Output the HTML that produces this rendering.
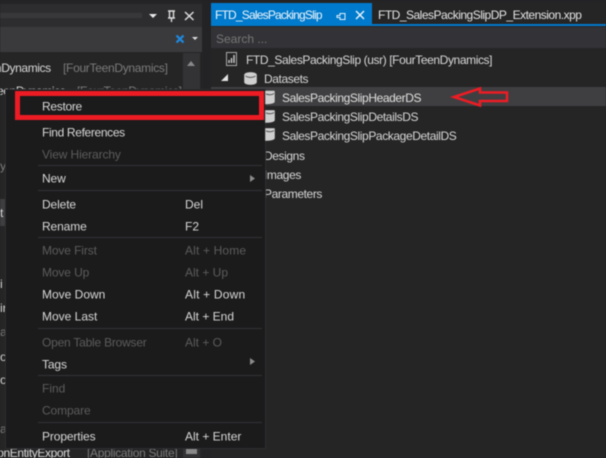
<!DOCTYPE html>
<html><head><meta charset="utf-8"><style>
html,body{margin:0;padding:0;background:#222224}
#r{position:relative;width:606px;height:458px;overflow:hidden;background:#252526;font:12px "Liberation Sans",sans-serif;color:#d8d8d8;filter:blur(.4px)}
.a{position:absolute}
.t{position:absolute;white-space:nowrap;line-height:16px;font-size:12px}
.d{color:#5c5c5c}
.g{color:#7b7b7b;letter-spacing:-.3px}
.k{letter-spacing:-.4px}
.m{letter-spacing:-.12px}
.s{position:absolute;left:38px;width:224px;height:1px;background:#333337}
svg{position:absolute;left:0;top:0}
</style></head><body><div id="r">
<div class="a" style="left:0;top:0;width:606px;height:3px;background:#242426"></div>
<div class="a" style="left:0;top:4px;width:202px;height:23px;background:#2d2d30"></div>
<div class="a" style="left:0;top:13px;width:142px;height:5px;background:#38383b"></div>
<div class="a" style="left:0;top:27px;width:202px;height:25px;background:#3a3a3d"></div>
<div class="a" style="left:0;top:52px;width:202px;height:406px;background:#252526"></div>
<div class="a" style="left:183px;top:53px;width:17px;height:405px;background:#333336"></div>
<div class="a" style="left:202px;top:0;width:9px;height:458px;background:#232325"></div>
<div class="a" style="left:211px;top:27px;width:395px;height:21px;background:#333337"></div>
<div class="a" style="left:211px;top:48px;width:395px;height:410px;background:#252526"></div>
<div class="a" style="left:211px;top:3px;width:161px;height:23px;background:#007acc"></div>
<div class="a" style="left:372px;top:24px;width:234px;height:2px;background:#007acc"></div>
<div class="a" style="left:211px;top:87px;width:395px;height:19px;background:#3f3f41"></div>
<div class="t" style="left:215px;top:7px;color:#eef6fc;letter-spacing:-.8px">FTD_SalesPackingSlip</div>
<div class="t" style="left:378px;top:7px;color:#e4e4e4;letter-spacing:-.5px">FTD_SalesPackingSlipDP_Extension.xpp</div>
<div class="t" style="left:216px;top:31px;color:#777">Search ...</div>
<div class="t k" style="left:246px;top:52px">FTD_SalesPackingSlip (usr) [FourTeenDynamics]</div>
<div class="t k" style="left:264px;top:71px">Datasets</div>
<div class="t k" style="left:282px;top:90px;color:#e0e0e0">SalesPackingSlipHeaderDS</div>
<div class="t k" style="left:282px;top:109px">SalesPackingSlipDetailsDS</div>
<div class="t k" style="left:282px;top:128px">SalesPackingSlipPackageDetailDS</div>
<div class="t k" style="left:264px;top:148px">Designs</div>
<div class="t k" style="left:264px;top:167px">Images</div>
<div class="t k" style="left:264px;top:186px">Parameters</div>
<div class="t k" style="left:-5px;top:60px">nDynamics</div>
<div class="t g" style="left:63px;top:60px">[FourTeenDynamics]</div>
<div class="t k" style="left:-3px;top:83px">eenDynamics</div>
<div class="t g" style="left:77px;top:83px">[FourTeenDynamics]</div>
<div class="t k" style="left:-8px;top:445px">tionEntityExport</div>
<div class="t g" style="left:87px;top:445px">[Application Suite]</div>
<div class="a" style="left:0;top:199px;width:5px;height:27px;background:#3e3e40"></div>
<div class="t" style="left:0;top:205px">t</div>
<div class="t g" style="left:0;top:158px">y</div>
<div class="t" style="left:0;top:276px">i</div>
<div class="t" style="left:0;top:300px">ir</div>
<div class="t g" style="left:0;top:324px">a</div>
<div class="t" style="left:0;top:349px">o</div>
<div class="t" style="left:0;top:372px">o</div>
<div class="t g" style="left:0;top:421px">a</div>
<div class="a" style="left:186px;top:448px;width:11px;height:6px;background:#8a8a8a"></div>
<div class="a" style="left:6px;top:90px;width:259px;height:358px;background:#1b1b1c;box-shadow:0 0 0 1px #2d2d30"></div>
<div class="s" style="top:165px"></div><div class="s" style="top:190px"></div><div class="s" style="top:237px"></div><div class="s" style="top:328px"></div><div class="s" style="top:375px"></div><div class="s" style="top:422px"></div>
<div class="a" style="left:0;top:0;width:606px;height:458px;transform:translateY(-.5px)">
<div class="t m" style="left:42px;top:99px;letter-spacing:-.3px">Restore</div>
<div class="t m" style="left:42px;top:125px;letter-spacing:-.35px">Find References</div>
<div class="t d m" style="left:42px;top:147px">View Hierarchy</div>
<div class="t m" style="left:42px;top:171px">New</div>
<div class="t m" style="left:42px;top:197px">Delete</div><div class="t" style="left:185px;top:197px">Del</div>
<div class="t m" style="left:42px;top:219px">Rename</div><div class="t" style="left:185px;top:219px">F2</div>
<div class="t d m" style="left:42px;top:243px">Move First</div><div class="t d" style="left:185px;top:243px;letter-spacing:.15px">Alt + Home</div>
<div class="t d m" style="left:42px;top:265px">Move Up</div><div class="t d" style="left:185px;top:265px">Alt + Up</div>
<div class="t" style="left:42px;top:287px">Move Down</div><div class="t" style="left:185px;top:287px;letter-spacing:.2px">Alt + Down</div>
<div class="t" style="left:42px;top:309px">Move Last</div><div class="t" style="left:185px;top:309px">Alt + End</div>
<div class="t d" style="left:42px;top:335px;letter-spacing:-.22px">Open Table Browser</div><div class="t d" style="left:185px;top:335px">Alt + O</div>
<div class="t m" style="left:42px;top:357px">Tags</div>
<div class="t d" style="left:42px;top:381px">Find</div>
<div class="t d m" style="left:42px;top:403px">Compare</div>
<div class="t m" style="left:42px;top:429px">Properties</div><div class="t" style="left:185px;top:429px">Alt + Enter</div>
</div>
<div class="a" style="left:15px;top:91px;width:239px;height:19px;border:5px solid #ed1c24"></div>
<svg width="606" height="458" viewBox="0 0 606 458">
<path d="M149 14h8l-4 4z" fill="#e8e8e8"/>
<path d="M168 11h7M169.500 11v7h4v-7M168 18h7M171.500 18v4" fill="none" stroke="#ddd" stroke-width="1.400"/>
<path d="M185 12l8.500 8M193.500 12l-8.500 8" stroke="#ddd" stroke-width="1.500"/>
<path d="M176.500 35.500l7 7M183.500 35.500l-7 7" stroke="#1e8ae0" stroke-width="2.200"/>
<path d="M192 37h6l-3 3z" fill="#ddd"/>
<path d="M187 66l4-5 4 5z" fill="#888"/>
<path d="M337 15.500h3v-2h5v6h-5v-2h-3z" fill="none" stroke="#dff0fb"/>
<path d="M356 11l8 8M364 11l-8 8" stroke="#eef6fc" stroke-width="1.400"/>
<rect x="226.500" y="52.500" width="10" height="13" fill="none" stroke="#a8a8a8"/><path d="M229 63v-3M231.500 63v-5M234 63v-8" stroke="#ccc" stroke-width="1.400"/>
<path d="M228 74V81H221z" fill="#e4e4e4"/>
<g fill="#cfcfcf" stroke="#252526" stroke-width=".4"><path d="M244 75c0-4 13-4 13 0v7c0 4-13 4-13 0z"/><path d="M265 90.500h9c1 0 1 1 1 2v9c0 2-4 3-10 3z"/><path d="M265 110h9c1 0 1 1 1 2v8c0 2-4 3-10 3z"/><path d="M265 128h9c1 0 1 1 1 2v8c0 2-4 3-10 3z"/></g>
<path d="M245.500 76c3 2 7 2 10 0M266 94c3 1 6 1 8-.5M266 113c3 1 6 1 8-.5M266 131c3 1 6 1 8-.5" fill="none" stroke="#555" />
<path d="M250 175l5 3.500-5 3.500zM250 358l5 3.500-5 3.500z" fill="#8c8c8c"/>
<path d="M454 97L480 88.500V92.500H507V101H480V105.500Z" fill="none" stroke="#ed1c24" stroke-width="2.500"/>
</svg>
</div></body></html>
